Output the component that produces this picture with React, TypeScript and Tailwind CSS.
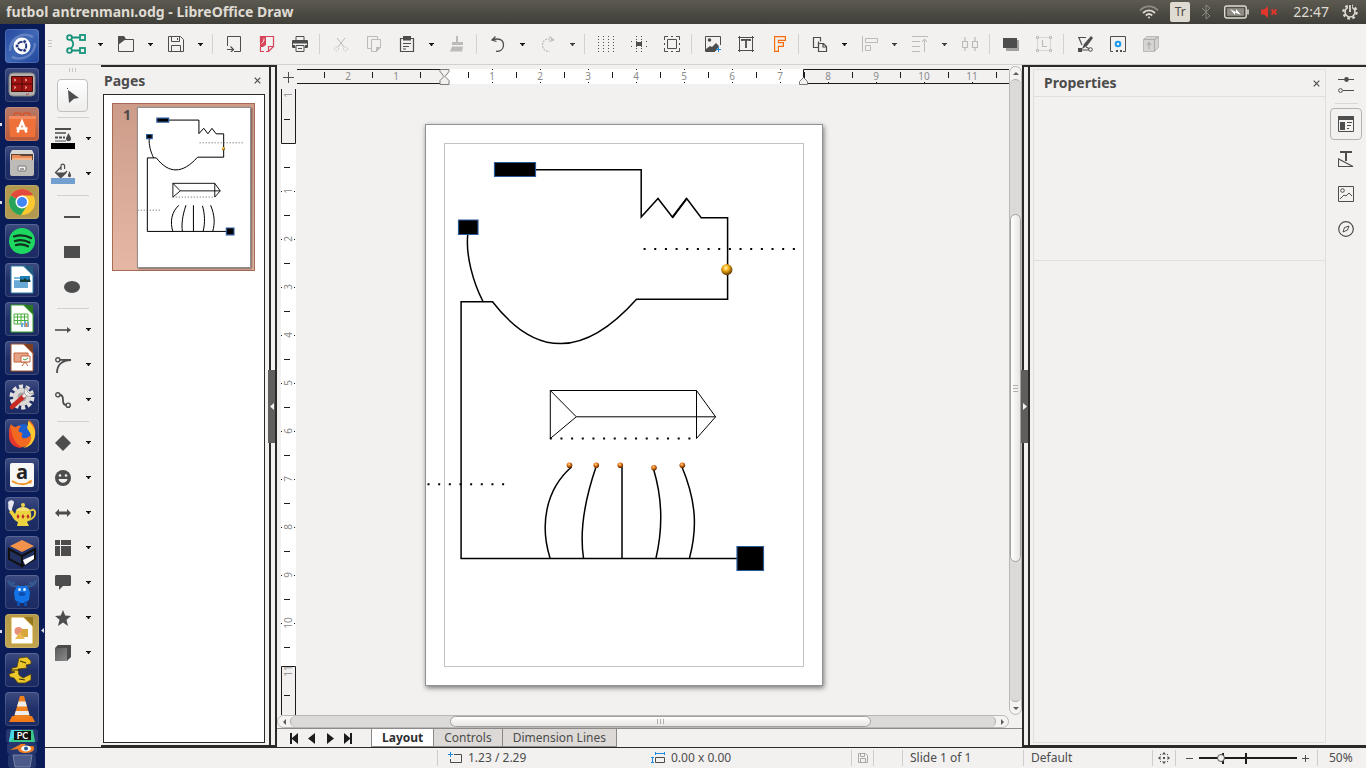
import React, { useState } from "react";

type Kids = { children: React.ReactNode };

const DARK = "#4d4d4d";
const PALE = "#bcbbb9";

/* ---------- shared pieces ---------- */

function Glyph({ children, size = "size-4" }: Kids & { size?: string }) {
  return (
    <svg viewBox="0 0 16 16" className={`${size} shrink-0`} fill="none" aria-hidden="true">
      {children}
    </svg>
  );
}

function Caret({ color = "#111" }: { color?: string }) {
  return (
    <svg viewBox="0 0 5 3" className="h-[3px] w-[5px]" aria-hidden="true">
      <path d="M0 0h5v1H4L3 3H2L1 1H0z" fill={color} />
    </svg>
  );
}

/* ---------- launcher ---------- */

function Doc({ main, children }: Kids & { main: string }) {
  return (
    <g>
      <path d="M6 3h15l7 8v19H6z" fill="#fff" stroke={main} strokeWidth="1" />
      <path d="M18 3h10v10z" fill={main} />
      <path d="M19 3h9v9z" fill="#000" opacity=".25" />
      {children}
    </g>
  );
}

type App = { name: string; tile: string; running?: boolean; active?: boolean; art: React.ReactNode };

const TILE = "bg-linear-to-b from-[#3d4b80] via-[#1f2f69] to-[#1c2b62]";

const apps: App[] = [
  {
    name: "Dash",
    tile: "bg-linear-to-br from-[#2448a0] via-[#4068b6] to-[#20459b]",
    art: (
      <g>
        <path d="M5 22C5 9 18 2 28 8M7 28c12 5 23-3 23-14" stroke="#86a0d2" strokeWidth="2.500" fill="none" opacity=".55" />
        <circle cx="17" cy="17" r="8.500" fill="#fff" />
        <circle cx="17" cy="17" r="4.300" fill="none" stroke="#24387e" strokeWidth="2" />
        <circle cx="12" cy="17" r="1.900" fill="#24387e" stroke="#fff" strokeWidth=".8" />
        <circle cx="19.600" cy="12.600" r="1.900" fill="#24387e" stroke="#fff" strokeWidth=".8" />
        <circle cx="19.600" cy="21.400" r="1.900" fill="#24387e" stroke="#fff" strokeWidth=".8" />
      </g>
    ),
  },
  {
    name: "Terminator",
    tile: TILE,
    art: (
      <g>
        <rect x="4" y="5" width="26" height="23" rx="4" fill="#b3b1ad" stroke="#83827f" />
        <rect x="6" y="8" width="22" height="16" rx="1" fill="#4b0808" />
        <path d="M7 9h9.500v6.500H7zM17.500 9H27v6.500h-9.500zM7 16.500h9.500V23H7zM17.500 16.500H27V23h-9.500z" fill="#a31512" />
        <path d="M9 11l2 1-2 1M20 11l2 1-2 1M9 18.500l2 1-2 1M20 18.500l2 1-2 1" stroke="#ffc9bd" fill="none" strokeWidth=".8" />
        <path d="M21 26l1.500.5 1.500-1" stroke="#c83a30" fill="none" />
      </g>
    ),
  },
  {
    name: "Software",
    tile: "bg-linear-to-b from-[#b57a68] to-[#bb5a38]",
    running: true,
    art: (
      <g>
        <path d="M9 10V7l2-1h3l2 1v3M18 10V7l2-1h3l2 1v3" stroke="#d8552c" strokeWidth="1.400" fill="none" />
        <path d="M4 9h27l-1 21H5z" fill="#f0703a" />
        <path d="M4 9h27v3H4z" fill="#f3895c" />
        <path d="M12.500 25.500l4.500-11 4.500 11M11.500 21.500h11" stroke="#fff" strokeWidth="2.400" fill="none" />
      </g>
    ),
  },
  {
    name: "Files",
    tile: TILE,
    art: (
      <g>
        <path d="M7 4h20l2 4v8H5V8z" fill="#d9d7d3" />
        <path d="M6 8h22v9H6z" fill="#5c4438" />
        <path d="M7 9h8l1 1h11v7H7z" fill="#e98a57" />
        <path d="M7 12h20v4H7z" fill="#f0b48d" />
        <rect x="5" y="14" width="24" height="16" rx="2" fill="#bdbbb7" />
        <rect x="13" y="20" width="8" height="5" rx="1" fill="#eee" stroke="#777" />
        <path d="M15 23h4" stroke="#555" />
      </g>
    ),
  },
  {
    name: "Chrome",
    tile: "bg-[#b19a50]",
    running: true,
    art: (
      <g>
        <circle cx="17" cy="17" r="13" fill="#fbc92f" />
        <path d="M17 17L5.700 10.500A13 13 0 0 1 28.300 10.500H17z" fill="#e24a3b" />
        <path d="M5.700 10.500A13 13 0 0 0 16 30l6-9.500-5-3.500z" fill="#27a35b" />
        <circle cx="17" cy="17" r="6.500" fill="#fff" />
        <circle cx="17" cy="17" r="5" fill="#4285f4" />
      </g>
    ),
  },
  {
    name: "Spotify",
    tile: TILE,
    art: (
      <g>
        <circle cx="17" cy="17" r="13" fill="#1ed760" />
        <path d="M9 12.500c6-2 12-1 17 1.500M10 17c5-1.500 10-1 14.500 1.500M11 21c4-1 8-.8 12 1.300" stroke="#10301c" strokeWidth="2.300" strokeLinecap="round" fill="none" />
      </g>
    ),
  },
  {
    name: "Writer",
    tile: TILE,
    art: (
      <Doc main="#2e7aa8">
        <path d="M9 14h15v2H9zM9 17h17v2H9z" fill="#7fb9dd" />
        <path d="M9 18h14v7H9z" fill="#6aa9d4" />
        <path d="M15 13h10v6H15z" fill="#1f7fb5" />
        <path d="M15 19v-3l3 1 2-2 2 2 3-1v3z" fill="#173b31" />
      </Doc>
    ),
  },
  {
    name: "Calc",
    tile: TILE,
    art: (
      <Doc main="#38a12c">
        <path d="M9 12h14v10H9z" fill="#fff" stroke="#4cae3c" />
        <path d="M9 15h14M9 18.500h14M12.500 12v10M16 12v10M19.500 12v10" stroke="#4cae3c" />
        <path d="M17 25v-4M20 25v-6M23 25v-5" stroke="#6aa9d4" strokeWidth="2" />
        <path d="M21.500 25v-4" stroke="#e9854f" strokeWidth="2" />
      </Doc>
    ),
  },
  {
    name: "Impress",
    tile: TILE,
    art: (
      <Doc main="#a8542e">
        <path d="M9 12h14v9H9z" fill="#e7a386" stroke="#c4623a" />
        <path d="M16 15h9v6h-9z" fill="#fff" stroke="#c4623a" />
        <path d="M18 18l2 1 3-2" stroke="#3f9e44" fill="none" />
        <path d="M20 21l-3 4M20 21l3 4" stroke="#c4623a" fill="none" />
      </Doc>
    ),
  },
  {
    name: "System Settings",
    tile: TILE,
    art: (
      <g>
        <circle cx="17" cy="17" r="10.500" fill="none" stroke="#e3e2e0" strokeWidth="4" strokeDasharray="4 2.600" />
        <circle cx="17" cy="17" r="9" fill="#dad9d6" />
        <circle cx="17" cy="17" r="4.500" fill="#a3a3a6" />
        <path d="M7 27l11-10" stroke="#c72a23" strokeWidth="4.500" strokeLinecap="round" />
        <path d="M18 17l6-6" stroke="#ecebea" strokeWidth="3" />
        <path d="M22 7a5 5 0 1 0 7 6l-4 1-3-3z" fill="#ecebea" stroke="#777" strokeWidth=".6" />
      </g>
    ),
  },
  {
    name: "Firefox",
    tile: TILE,
    art: (
      <g>
        <circle cx="18" cy="15" r="10" fill="#1d5fd1" />
        <path d="M6 5c1 2 3 3 5 3 2-2 4-1 5 0-2 1-3 3-2 5 3 0 4 2 3 3-2 4 6 5 9-1 1-4-1-7-3-9 1-2 1-4 1-5 5 4 7 9 6 14a13 13 0 0 1-26 0C4 12 4 9 6 5z" fill="#f26a21" />
        <path d="M23 2c6 5 8 10 7 15a13 13 0 0 1-12 12c7-3 9-8 8-13-1-3-3-5-4-7 1-2 1-5 1-7z" fill="#fdc830" />
        <path d="M6 8c0 6 2 15 11 21C8 29 4 23 4 17c0-3 0-6 2-9z" fill="#e6352d" />
      </g>
    ),
  },
  {
    name: "Amazon",
    tile: TILE,
    art: (
      <g>
        <rect x="5" y="5" width="24" height="24" rx="2" fill="#f6f6f4" />
        <text x="17" y="21" textAnchor="middle" fontSize="20" fontWeight="bold" fontFamily="Open Sans, sans-serif" fill="#222">a</text>
        <path d="M7 23c6 4 13 4 18 1" stroke="#f5911e" strokeWidth="2" fill="none" />
        <path d="M23 23l4-1-1 4z" fill="#f5911e" />
      </g>
    ),
  },
  {
    name: "Teapot",
    tile: TILE,
    art: (
      <g>
        <path d="M5 14C2 11 4 9 3 6c0-3 5-4 6-1 0 3-2 4-2 9z" fill="#e6e6ee" />
        <circle cx="18" cy="8" r="2" fill="#f1d64c" />
        <path d="M11 13c4-4 10-4 14 0l-1 2H12z" fill="#f6e272" />
        <path d="M25 14c6-5 8 6-1 9" stroke="#e9cc3f" strokeWidth="2" fill="none" />
        <path d="M11 14h14c3 5 0 9-3 11l2 4H12l1-4c-3-1-5-4-6-6l-3-4 3-2 3 4z" fill="#ecd23f" />
        <path d="M13 17l1.500 2.500L13 22l-1.500-2.500zM18 17l1.500 2.500L18 22l-1.500-2.500zM23 17l1.500 2.500L23 22l-1.500-2.500z" fill="#bf2a2a" />
      </g>
    ),
  },
  {
    name: "Cube viewer",
    tile: TILE,
    art: (
      <g>
        <path d="M17 4l12 6-12 6-12-6z" fill="#f3924a" />
        <path d="M4 13l13 7v10L4 23z" fill="#22315f" stroke="#111" strokeWidth="2" />
        <path d="M17 20l13-7v10l-13 7z" fill="#22315f" stroke="#111" strokeWidth="2" />
        <path d="M18 24l11-5v4l-9 6z" fill="#fff" />
      </g>
    ),
  },
  {
    name: "Moose",
    tile: TILE,
    art: (
      <g>
        <path d="M3 5c1 6 7 7 11 6M31 5c-1 6-7 7-11 6M4 8l6 0M30 8l-6 0" stroke="#35578f" strokeWidth="2.500" fill="none" />
        <path d="M12 11h10l3 6-1 8-4 3h-6l-4-3-1-8z" fill="#1473e6" />
        <circle cx="14.500" cy="14.500" r="1.500" fill="#d9ecff" /><circle cx="19.500" cy="14.500" r="1.500" fill="#d9ecff" />
        <ellipse cx="17" cy="19" rx="3.500" ry="2" fill="#0b4fb0" />
        <path d="M12 26v5h3v-4M19 27v4h3v-5" fill="#0d4fae" />
      </g>
    ),
  },
  {
    name: "Draw",
    tile: "bg-linear-to-b from-[#b49a48] to-[#c1a453]",
    running: true,
    active: true,
    art: (
      <Doc main="#c8a12c">
        <circle cx="13.500" cy="17" r="4" fill="#e79079" />
        <path d="M16 15h7v8h-7z" fill="#d9a63e" />
        <path d="M10 25l5-7 5 7z" fill="#ebb84d" />
      </Doc>
    ),
  },
  {
    name: "Rapid tool",
    tile: TILE,
    art: (
      <g>
        <path d="M14 5l8-1 4 4v3l-5 1 1 3-9 1 1 6 4 3 8-4v6l-6 3h-7l-4-5-4-1-1-3 6-2-4-1 1-3 5-1 1-5z" fill="#ecc72c" stroke="#4c3e0d" strokeWidth=".8" />
        <path d="M6 17h10M15 8l6 2M14 26l6 1" stroke="#3b300a" strokeWidth="1.200" />
      </g>
    ),
  },
  {
    name: "VLC",
    tile: TILE,
    art: (
      <g>
        <path d="M7 24h20l3 6H4z" fill="#ef7a17" />
        <path d="M15 4h4l6 21c-4 3-12 3-16 0z" fill="#f0821e" />
        <path d="M13.500 9.500h7l1.400 5h-9.800zM10.800 19h12.500l1.200 4h-15z" fill="#ededed" />
      </g>
    ),
  },
];

function Launcher() {
  return (
    <nav aria-label="Launcher" className="flex w-[45px] shrink-0 flex-col items-center gap-[5px] overflow-hidden border-r border-[#15215c] bg-[#0a1c58] pt-[5px]">
      {apps.map((a) => (
        <button key={a.name} aria-label={a.name} className={`relative size-[34px] shrink-0 rounded-[4px] shadow-[inset_0_0_0_1px_rgba(255,255,255,0.14)] ${a.tile}`}>
          <svg viewBox="0 0 34 34" className="size-full" aria-hidden="true">{a.art}</svg>
          {a.running && <span className="absolute top-4 -left-[5px] h-[3px] w-[2px] bg-[#dcdde6]" />}
          {a.active && (
            <svg viewBox="0 0 3 5" className="absolute top-[14px] -right-[5px] h-[5px] w-[3px]"><path d="M3 0v5L0 2.500z" fill="#dcdde6" /></svg>
          )}
        </button>
      ))}
      <button aria-label="More applications" className="-mt-[3px] shrink-0">
        <svg viewBox="0 0 34 40" className="h-10 w-[34px]">
          <rect x="1" y="1" width="32" height="14" rx="3" fill="#26376f" />
          <path d="M6 2h22l2 12H4z" fill="#38c98b" />
          <path d="M6 2h11L4 14z" fill="#45d6e8" />
          <rect x="9" y="3" width="17" height="9" fill="#111" />
          <text x="17.500" y="11" textAnchor="middle" fontSize="9" fontWeight="bold" fontFamily="Lato, sans-serif" fill="#fff">PC</text>
          <rect x="2" y="15" width="30" height="11" rx="3" fill="#26376f" />
          <path d="M5 22l11-6h5l-2 2h9c3 3 0 7-7 7-6 0-8-2-8-4z" fill="#ee7d22" />
          <ellipse cx="21" cy="20.500" rx="5" ry="3" fill="#fff" /><circle cx="21" cy="20.500" r="2" fill="#265d9c" />
          <rect x="3" y="26" width="28" height="14" rx="3" fill="#24356c" />
          <path d="M8 27h19l-2 12H10z" fill="#4b5a8a" stroke="#8792b2" strokeWidth=".8" />
        </svg>
      </button>
    </nav>
  );
}

/* ---------- top bar ---------- */

function TopBar() {
  return (
    <header className="flex h-6 shrink-0 items-center bg-linear-to-b from-[#5c5a50] to-[#3f3e38] pr-2 pl-[6px] text-[#dfdbd2]">
      <h1 className="flex-1 text-[14px] leading-6 font-bold">futbol antrenmanı.odg - LibreOffice Draw</h1>
      <div className="flex items-center">
        <svg viewBox="0 0 20 14" className="mr-[11px] h-[14px] w-5" fill="none" stroke="#dfdbd2" strokeWidth="1.800">
          <path d="M1 5.500c5-5.500 13-5.500 18 0" stroke="#8f8d86" />
          <path d="M4 8c3.500-3.500 8.500-3.500 12 0M6.800 10.500c2-1.800 4.400-1.800 6.400 0" />
          <circle cx="10" cy="12.500" r="1" fill="#dfdbd2" stroke="none" />
        </svg>
        <span className="flex h-5 w-5 items-center justify-center rounded-[2px] bg-[#dfdbd2] text-[12px] text-[#4a4942]">Tr</span>
        <svg viewBox="0 0 10 16" className="ml-[11px] h-4 w-[10px]" fill="none" stroke="#8a8881"><path d="M1 4l8 8-4 3V1l4 3-8 8" /></svg>
        <svg viewBox="0 0 25 14" className="ml-[13px] h-[14px] w-[25px]" fill="none">
          <rect x=".7" y="1" width="21.500" height="12" rx="2" stroke="#dfdbd2" strokeWidth="1.400" />
          <rect x="3" y="3.200" width="17" height="7.600" fill="#8d8b83" />
          <path d="M6 4l6 3V4l5 6-6-2.500V10z" fill="#fff" />
          <path d="M24 4.500v5" stroke="#dfdbd2" strokeWidth="1.500" />
        </svg>
        <svg viewBox="0 0 18 14" className="ml-3 h-[14px] w-[18px]">
          <path d="M0 4.500h3L7 1v12L3 9.500H0z" fill="#e0362c" />
          <path d="M10.500 4.500l5 5M15.500 4.500l-5 5" stroke="#e0362c" strokeWidth="2" />
        </svg>
        <time className="ml-[14px] text-[14px] leading-6">22:47</time>
        <svg viewBox="0 0 16 16" className="ml-[13px] size-4" fill="none">
          <circle cx="8" cy="8" r="6.600" stroke="#dfdbd2" strokeWidth="2.200" strokeDasharray="2.700 2.480" />
          <circle cx="8" cy="8" r="5" stroke="#dfdbd2" strokeWidth="1.600" />
          <path d="M8 0v8" stroke="#4a4942" strokeWidth="4" /><path d="M8 1v7" stroke="#dfdbd2" strokeWidth="1.800" />
        </svg>
      </div>
    </header>
  );
}

/* ---------- toolbar ---------- */

type Tool = { name: string; icon: React.ReactNode; menu?: boolean; off?: boolean };

const toolGroups: Tool[][] = [
  [
    {
      name: "Templates",
      menu: true,
      icon: (
        <svg viewBox="0 0 20 20" className="size-5" fill="none" stroke="#19937a" strokeWidth="1.800">
          <circle cx="3.500" cy="3.500" r="2.400" /><circle cx="3.500" cy="16.500" r="2.400" />
          <rect x="14" y="1" width="5" height="5" /><rect x="14" y="14" width="5" height="5" />
          <path d="M6 3.500h8M6 16.500h8M5 5.500c3 3 3 6 0 9" />
        </svg>
      ),
    },
    { name: "Open", menu: true, icon: <Glyph><path d="M.5 1v14.500h15V3.500H7" stroke={DARK} /><path d="M0 0h6l2 3-4 3-4 3z" fill={DARK} /></Glyph> },
    { name: "Save", menu: true, icon: <Glyph><path d="M.5.5h12l3 3v12H.5zM3.500.5v5h8v-5M3.500 15.500v-6h9v6M9.500 2v2" stroke={DARK} /></Glyph> },
  ],
  [
    { name: "Export", icon: <Glyph><path d="M1.500 10V.5h13v15H8" stroke={DARK} /><path d="M1 13.500h6M4.500 10.500l3 3-3 3" stroke={DARK} strokeWidth="1.200" /></Glyph> },
    { name: "Export as PDF", icon: <Glyph><path d="M1.500 7V.5h13v10l-5 5H7M14 10.500H9.500V15M1.500 10v5.500H5" stroke="#d8455a" strokeWidth="1.200" /><path d="M1 0h6v9l-3 2H1z" fill="#d8455a" /><path d="M2.500 7.500C5 6 5 4 5 2.500" stroke="#fff" strokeWidth=".9" /></Glyph> },
    { name: "Print", icon: <Glyph><path d="M4 .5h8v4H4zM.5 4.500h15v7h-3M3.500 11.500h-3v-7" stroke={DARK} /><path d="M1 5h14v2.500H1zM1 9h2v3H1zM13 9h2v3h-2z" fill={DARK} /><path d="M4 9.500h8v6H4zM6 12.500h4" stroke={DARK} /></Glyph> },
  ],
  [
    { name: "Cut", off: true, icon: <Glyph><path d="M4 2l7 9M12 2l-7 9" stroke={PALE} /><circle cx="3.500" cy="13" r="2" stroke={PALE} strokeDasharray="1 1" /><circle cx="12.500" cy="13" r="2" stroke={PALE} strokeDasharray="1 1" /></Glyph> },
    { name: "Copy", off: true, icon: <Glyph><path d="M5 12.500H1.500v-12h10v3M5.500 3.500h9v8l-4 4h-5z" stroke={PALE} /><path d="M10 11h5l-5 5z" fill={PALE} /></Glyph> },
    { name: "Paste", menu: true, icon: <Glyph><path d="M1.500 2.500h13v13h-13z" stroke={DARK} strokeWidth="1.200" /><path d="M4 0h8v4.500H4z" fill={DARK} /><path d="M4 7.500h8M4 10.500h6M4 13h3" stroke={DARK} /></Glyph> },
    { name: "Clone formatting", off: true, icon: <Glyph><path d="M7 0h2v6h5v3H3V6h4zM3 10.500h11l-1 5H1z" fill={PALE} /></Glyph> },
  ],
  [
    { name: "Undo", menu: true, icon: <Glyph><path d="M5.500 .5L2 4l4.500 1.500M2.500 4C9 1.500 13.500 4 13.500 9c0 4-3 6.500-7.500 6.500" stroke={DARK} strokeWidth="1.300" /></Glyph> },
    { name: "Redo", menu: true, off: true, icon: <Glyph><path d="M9.500 .5L13.500 4 9 5.500" stroke={PALE} strokeWidth="1.200" /><path d="M13 4C7 1.500 2.500 4 2.500 9c0 4 3 6.500 7 6.500" stroke={PALE} strokeWidth="1.200" strokeDasharray="2 1" /></Glyph> },
  ],
  [
    { name: "Display grid", icon: <Glyph><path d="M.5 0v16M5.500 0v16M10.500 0v16M15.500 0v16" stroke={DARK} strokeDasharray="1 2" /></Glyph> },
    { name: "Helplines", icon: <Glyph><path d="M5.500 0v16M10.500 0v16" stroke={DARK} strokeDasharray="1 2" /><path d="M0 5.500h16M0 10.500h16" stroke={DARK} strokeDasharray="1 4" /><path d="M5 6h6v4H5z" fill={DARK} /></Glyph> },
    { name: "Zoom and pan", icon: <Glyph><path d="M.5 4V.5H4M12 .5h3.500V4M15.500 12v3.500H12M4 15.500H.5V12M3.500 3.500h9v9h-9z" stroke={DARK} /><path d="M7 .5h2M7 15.500h2M.5 7v2M15.500 7v2" stroke={DARK} /></Glyph> },
  ],
  [
    { name: "Insert image", icon: <Glyph><path d="M15.500 9V.5H.5v15H10" stroke={DARK} /><circle cx="4.500" cy="4" r="1.800" fill={DARK} /><path d="M1 15V13l4-3 2 1 4-4 3 3-3 5z" fill={DARK} /><path d="M13.500 11v5M11 13.500h5" stroke="#1b8ae0" /></Glyph> },
    { name: "Insert text box", icon: <Glyph><path d="M0 1.500h16M0 14.500h16M1.500 0v16M14.500 0v16" stroke={DARK} /><path d="M4 5V3.800h8V5M8 4v8" stroke={DARK} strokeWidth="1.800" /></Glyph> },
    { name: "Fontwork", icon: <Glyph><path d="M3.600.6h10.800v3.800H7.400v2.200h5v3.800h-5v5H3.600z" stroke="#f66b0c" strokeWidth="1.200" /></Glyph> },
  ],
  [
    { name: "Transformations", menu: true, icon: <Glyph><path d="M6 11.500H1.500v-10h7v4M6.500 5.500v6" stroke={DARK} strokeWidth="1.200" /><path d="M6.500 7.500h5l3 3v5h-8zM11 8v3h3" stroke={DARK} strokeWidth="1.200" /></Glyph> },
    { name: "Align", menu: true, off: true, icon: <Glyph><path d="M.5 0v16M3.500 2.500h12v4h-12zM3.500 9.500h5v5h-5z" stroke={PALE} /></Glyph> },
    { name: "Arrange", menu: true, off: true, icon: <Glyph><path d="M0 .5h16M0 5.500h8M0 10.500h8M0 15.500h8M12.500 16V3M10 6l2.500-3L15 6" stroke={PALE} /></Glyph> },
    { name: "Distribute", off: true, icon: <Glyph><path d="M.5 5.500h5v6h-5zM10.500 5.500h5v6h-5zM3 1v4M3 12v3M13 1v4M13 12v3" stroke={PALE} strokeWidth="1.200" /></Glyph> },
  ],
  [
    { name: "Shadow", icon: <Glyph><path d="M3 4h13v11H3z" fill="#a3a2a0" /><path d="M0 2h14v10H0z" fill={DARK} /></Glyph> },
    { name: "Crop", off: true, icon: <Glyph><path d="M1.500 1.500h13v13h-13z" stroke={PALE} strokeDasharray="1 1" /><path d="M.5.5h2v2h-2zM13.500.5h2v2h-2zM.5 13.500h2v2h-2zM13.500 13.500h2v2h-2z" fill="#f2f1f0" stroke={PALE} /><path d="M6.500 4v6.500H11" stroke={PALE} strokeWidth="1.200" /></Glyph> },
  ],
  [
    { name: "Toggle point edit mode", icon: <Glyph><path d="M1 1.500h8M2 2l3 7M3 14h10M9 11l4 2" stroke={DARK} strokeWidth="1.200" /><path d="M14 0l2 2-6 8-5 3 2-5zM1 12h4v4H1z" fill={DARK} /><circle cx="13.500" cy="13.500" r="1.800" fill="#f2f1f0" stroke={DARK} /></Glyph> },
    { name: "Glue points", icon: <Glyph><path d="M3 15.500H.5V.5h15v15H13" stroke={DARK} /><circle cx="8" cy="8" r="2.300" stroke="#1b9af0" strokeWidth="2" /><path d="M6 15h2M10 15h2" stroke={DARK} strokeWidth="2" /></Glyph> },
    { name: "Toggle extrusion", off: true, icon: <Glyph><path d="M.5 3.500l3-3h12v11l-4 4H.5z" fill="#d5d4d2" stroke={PALE} /><path d="M.5 3.500h11v12M11.500 3.500l4-3M6 13V7M4 9l2-2.500L8 9" stroke="#aeadab" strokeWidth="1.200" /></Glyph> },
  ],
];

function Toolbar() {
  return (
    <div role="toolbar" aria-label="Standard" className="flex h-[41px] shrink-0 items-center overflow-hidden border-b border-[#d3d1cf] pl-[3px]">
      <svg viewBox="0 0 4 8" className="mr-[7px] h-2 w-1 shrink-0"><path d="M0 .5h4M0 3.500h4M0 6.500h4" stroke="#c9c7c5" /></svg>
      {toolGroups.map((group, i) => (
        <React.Fragment key={i}>
          {i > 0 && <span className="mx-[3px] h-5 w-[2px] shrink-0 border-l border-[#d3d1cf]" />}
          {group.map((t) => (
            <React.Fragment key={t.name}>
              <button aria-label={t.name} disabled={t.off} className="flex h-8 w-[33px] shrink-0 items-center justify-center">{t.icon}</button>
              {t.menu && (
                <button aria-label={`${t.name} options`} className="flex h-8 w-[17px] shrink-0 items-center justify-center">
                  <Caret color={t.off ? "#3a3a3a" : "#111"} />
                </button>
              )}
            </React.Fragment>
          ))}
        </React.Fragment>
      ))}
    </div>
  );
}

/* ---------- drawing tools ---------- */

const colorTools: Tool[] = [
  {
    name: "Line color",
    menu: true,
    icon: (
      <svg viewBox="0 0 24 21" className="h-[21px] w-6" fill="none">
        <path d="M4 1h16" stroke={DARK} strokeWidth="2" /><path d="M4 5h11" stroke={DARK} strokeWidth="1.500" />
        <path d="M4 9.500h10" stroke={DARK} strokeWidth="2" strokeDasharray="3 1" /><path d="M4 13h11" stroke={DARK} />
        <path d="M17.500 5l2.500 5a2.600 2.600 0 1 1-5 0z" fill={DARK} />
        <path d="M0 15h24v6H0z" fill="#000" />
      </svg>
    ),
  },
  {
    name: "Fill color",
    menu: true,
    icon: (
      <svg viewBox="0 0 24 21" className="h-[21px] w-6" fill="none">
        <path d="M10 7V3a1.800 1.800 0 0 1 3.600 0v3M10 4L4.500 9.500l5 5L16 8" stroke={DARK} strokeWidth="1.200" />
        <path d="M4 9.500h12l-5 5H9z" fill={DARK} /><path d="M18.500 8l1.500 4a1.600 1.600 0 1 1-3 0z" fill={DARK} />
        <path d="M0 15h24v6H0z" fill="#729fcf" />
      </svg>
    ),
  },
];

const plainTools: Tool[] = [
  { name: "Line", icon: <Glyph><path d="M0 8h16" stroke={DARK} strokeWidth="2" /></Glyph> },
  { name: "Rectangle", icon: <Glyph><path d="M0 2h16v12H0z" fill={DARK} /></Glyph> },
  { name: "Ellipse", icon: <Glyph><ellipse cx="8" cy="8" rx="8" ry="6" fill={DARK} /></Glyph> },
];

const lineTools: Tool[] = [
  { name: "Lines and arrows", menu: true, icon: <Glyph><path d="M0 8h13" stroke={DARK} strokeWidth="1.600" /><path d="M12 5l4 3-4 3z" fill={DARK} /></Glyph> },
  { name: "Curves and polygons", menu: true, icon: <Glyph><circle cx="2.800" cy="2.800" r="2.100" stroke={DARK} strokeWidth="1.400" /><path d="M5 2.800h11M16 3C8 3 2 7 2 16" stroke={DARK} strokeWidth="1.800" /></Glyph> },
  { name: "Connectors", menu: true, icon: <Glyph><circle cx="2.800" cy="2.800" r="2.100" stroke={DARK} strokeWidth="1.400" /><circle cx="13.200" cy="13.200" r="2.100" stroke={DARK} strokeWidth="1.400" /><path d="M5 3c6 0 0 10 6 10" stroke={DARK} strokeWidth="1.800" /></Glyph> },
];

const shapeTools: Tool[] = [
  { name: "Basic shapes", menu: true, icon: <Glyph><path d="M8 0l8 8-8 8-8-8z" fill={DARK} /></Glyph> },
  { name: "Symbol shapes", menu: true, icon: <Glyph><circle cx="8" cy="8" r="8" fill={DARK} /><circle cx="5" cy="5.500" r="1.300" fill="#f2f1f0" /><circle cx="11" cy="5.500" r="1.300" fill="#f2f1f0" /><path d="M3.500 9h9c-1 5-8 5-9 0z" fill="#f2f1f0" /></Glyph> },
  { name: "Block arrows", menu: true, icon: <Glyph><path d="M0 8l4-4v2.500h8V4l4 4-4 4V9.500H4V12z" fill={DARK} /></Glyph> },
  { name: "Flowchart", menu: true, icon: <Glyph><path d="M0 0h5v5H0zM6 0h10v5H6zM0 6h5v10H0zM6 6h10v10H6z" fill={DARK} /></Glyph> },
  { name: "Callouts", menu: true, icon: <Glyph><path d="M1 0h14l1 1v9l-1 1H8l-4 4v-4H1l-1-1V1z" fill={DARK} /></Glyph> },
  { name: "Stars and banners", menu: true, icon: <Glyph><path d="M8 0l2.200 5.500L16 6l-4.500 3.700L13 16l-5-3.500L3 16l1.500-6.300L0 6l5.800-.5z" fill={DARK} /></Glyph> },
  {
    name: "3D objects",
    menu: true,
    icon: (
      <Glyph>
        <defs><linearGradient id="cube" x1="0" y1="0" x2="1" y2="1"><stop offset="0" stopColor="#5a5a5a" /><stop offset="1" stopColor="#8a8a8a" /></linearGradient></defs>
        <path d="M0 3l3-3h13v12l-4 4H0z" fill="#4a4a4a" /><path d="M0 3h12v13H0z" fill="url(#cube)" />
      </Glyph>
    ),
  },
];

function ToolRow({ t }: { t: Tool }) {
  return (
    <div className={`flex h-[35px] shrink-0 items-center ${t.menu ? "pl-[6px]" : "pl-[15px]"}`}>
      <button aria-label={t.name} className="flex h-7 w-6 items-center justify-center">{t.icon}</button>
      {t.menu && <button aria-label={`${t.name} options`} className="ml-[5px] flex h-7 w-4 items-center justify-center"><Caret /></button>}
    </div>
  );
}

function ToolRule() {
  return <div className="flex h-2 shrink-0 items-center pl-3"><span className="w-8 border-t border-[#d3d1cf]" /></div>;
}

function DrawingTools() {
  return (
    <div role="toolbar" aria-label="Drawing" className="flex w-14 shrink-0 flex-col overflow-hidden">
      <div className="flex h-[13px] shrink-0 justify-center pt-[3px]">
        <svg viewBox="0 0 8 4" className="h-1 w-2"><path d="M.5 0v4M3.500 0v4M6.500 0v4" stroke="#c9c7c5" /></svg>
      </div>
      <div className="flex h-[35px] shrink-0 items-center pl-3">
        <button aria-label="Select" className="flex h-[33px] w-[31px] items-center justify-center rounded-[4px] border border-[#c3c1bf] bg-linear-to-b from-white to-[#eeedec]">
          <svg viewBox="0 0 16 16" className="size-4"><path d="M3 2l11 8-5 .8L4 15z" fill={DARK} /><path d="M2 0h1v1H2z" fill={DARK} /></svg>
        </button>
      </div>
      <ToolRule />
      {colorTools.map((t) => <ToolRow key={t.name} t={t} />)}
      <ToolRule />
      {plainTools.map((t) => <ToolRow key={t.name} t={t} />)}
      <ToolRule />
      {lineTools.map((t) => <ToolRow key={t.name} t={t} />)}
      <ToolRule />
      {shapeTools.map((t) => <ToolRow key={t.name} t={t} />)}
    </div>
  );
}

/* ---------- the drawing itself ---------- */

const balls = [[569.5, 465.2], [596.3, 465.2], [620.3, 465.2], [654, 467.8], [682.3, 465.2]];

function Drawing({ id, thumb, className }: { id: string; thumb?: boolean; className: string }) {
  const w = thumb ? 1 : 1.5;
  const thin = thumb ? 0.9 : 1;
  const dot = { stroke: thumb ? "#555" : "#000", strokeWidth: thumb ? 1 : 2, strokeDasharray: thumb ? "1 2" : "2 8.660" };
  return (
    <svg viewBox="425 124 398 562" className={className} role="img" aria-label="Slide 1">
      <defs>
        <radialGradient id={`${id}g`} cx=".42" cy=".35" r=".65"><stop offset="0" stopColor="#fff4b8" /><stop offset=".4" stopColor="#f6b017" /><stop offset="1" stopColor="#5a3200" /></radialGradient>
        <radialGradient id={`${id}o`} cx=".42" cy=".35" r=".65"><stop offset="0" stopColor="#ffd9a0" /><stop offset=".4" stopColor="#ec7a18" /><stop offset="1" stopColor="#5a2400" /></radialGradient>
      </defs>
      {!thumb && <rect x="444.500" y="143.500" width="359" height="523" fill="none" stroke="#c3c3c3" />}
      <g fill="none" stroke="#000" strokeWidth={w}>
        <path vectorEffect="non-scaling-stroke" d="M535 169.700H641.200V217L658 198.500 672.500 217.300 686.700 198.500 701.200 217.700H727.600V299.200H636.500C584 358 536 358 492.500 301.700H461.100V558.400H738" />
        <path vectorEffect="non-scaling-stroke" d="M467.800 234C465.500 255 473 282 483 301.500" />
        <path vectorEffect="non-scaling-stroke" d="M571.500 467C545 490 540 526 550 558M596 467C583 505 580 535 583.500 558M622 467V558M653.500 469C662 497 663 528 656 558M682 467C697 503 697 530 689.500 558" />
      </g>
      {!thumb && <path d="M672.500 217.300L686.700 198.500" stroke="#000" strokeWidth="2" />}
      <path vectorEffect="non-scaling-stroke" d="M550.300 438.500V390.500H696.500L715.600 416.800 696.500 438.500V390.500M550.300 390.500L576.300 416.800 550.300 438.500M576.300 416.800H715.600" fill="none" stroke="#000" strokeWidth={thin} />
      <path vectorEffect="non-scaling-stroke" d="M643.600 249H795.500M549.800 438.500H692M427.500 484.300H505" fill="none" {...dot} />
      <g fill="#000" stroke="#2b5a9b" strokeWidth="1.200">
        <rect vectorEffect="non-scaling-stroke" x="494.500" y="162.500" width="41" height="14" />
        <rect vectorEffect="non-scaling-stroke" x="458.500" y="220" width="19.500" height="14.500" />
        <rect vectorEffect="non-scaling-stroke" x="737" y="546.500" width="26.500" height="24" />
      </g>
      <circle cx="726.800" cy="269.600" r="5.600" fill={`url(#${id}g)`} />
      {!thumb && balls.map(([x, y]) => <circle key={x} cx={x} cy={y} r="2.800" fill={`url(#${id}o)`} />)}
    </svg>
  );
}

/* ---------- pages panel ---------- */

function CloseX() {
  return <svg viewBox="0 0 7 7" className="size-[7px]"><path d="M.7.7l5.600 5.600M6.300.7L.7 6.300" stroke="#4d4d4d" strokeWidth="1.200" /></svg>;
}

function PagesPanel() {
  return (
    <section aria-label="Pages" className="flex w-[168px] shrink-0 flex-col border-y-2 border-[#2c2a28] px-[2px] pb-[2px]">
      <div className="flex h-[27px] items-center justify-between pr-[6px] pl-[1px]">
        <h2 className="text-[14px] leading-5 font-bold text-[#4c4c4c]">Pages</h2>
        <button aria-label="Close pages panel"><CloseX /></button>
      </div>
      <div className="mr-[2px] flex-1 border border-[#2c2a28] bg-white py-2 pr-[9px] pl-2">
        <button aria-label="Page 1" className="flex h-[168px] w-full items-start border border-[#a86b53] bg-linear-to-b from-[#cc9c89] to-[#e5b8a5] py-[3px] pr-[3px] pl-[10px]">
          <span className="w-[14px] text-left text-[14px] leading-4 font-bold text-[#4c4c4c]">1</span>
          <span className="flex flex-1 bg-white shadow-[1px_1px_2px_rgba(0,0,0,0.45)] outline-1 -outline-offset-1 outline-[#8f8f8f]">
            <Drawing id="t" thumb className="w-full" />
          </span>
        </button>
      </div>
    </section>
  );
}

function Splitter({ label, end }: { label: string; end?: boolean }) {
  return (
    <div className="flex w-2 shrink-0 items-center justify-end border-x-[2px] border-y-2 border-[#2c2a28]">
      <button aria-label={label} className="flex h-[73px] w-[7px] shrink-0 items-center justify-center bg-[#5f5e5c]">
        <svg viewBox="0 0 4 7" className="h-[7px] w-1"><path d={end ? "M0 0v7l4-3.500z" : "M4 0v7L0 3.500z"} fill="#f2f1f0" /></svg>
      </button>
    </div>
  );
}

/* ---------- rulers ---------- */

const INCH = 48;
const range = (a: number, b: number) => Array.from({ length: b - a + 1 }, (_, i) => a + i);

function HorizontalRuler() {
  const zero = 147;
  const end = 506;
  return (
    <svg className="h-4 min-w-0 flex-1" aria-label="Horizontal ruler" role="img">
      <rect x={zero} y="0" width={end - zero} height="15" fill="#fff" />
      <path d={`M0 .5H${zero}M0 14.500H${zero}M${end + 0.5} 14V.5H3000M${end} 14.500H3000`} fill="none" stroke="#1c1c1c" />
      {range(-3, 11).map((n) => (
        <g key={n}>
          {n !== 0 && n > -3 && <text x={zero + n * INCH} y="11" textAnchor="middle" fontSize="10" fill="#8b8b8b">{Math.abs(n)}</text>}
          <path d={`M${zero + n * INCH + 24.5} 3v6`} stroke="#1c1c1c" />
          {n > 0 && <path d={`M${zero + n * INCH + 0.5} 0v1M${zero + n * INCH + 0.5} 13v1`} stroke="#1c1c1c" />}
        </g>
      ))}
      <path d={`M${zero - 4} .5h9v2l-4 5 4 4v4h-9v-4l4-4-4-5zM${end - 3.5} 15.500v-3l4-4 4 4v3z`} fill="#f2f1f0" stroke="#7a7a7a" />
    </svg>
  );
}

function VerticalRuler() {
  const zero = 58;
  const end = 581;
  return (
    <svg className="ml-1 h-full w-4 shrink-0" aria-label="Vertical ruler" role="img">
      <rect x="0" y={zero} width="15" height={end - zero} fill="#fff" />
      <path d={`M.5 4V${zero + 0.5}H14.500V4M.5 3000V${end + 0.5}H14.500V3000`} fill="none" stroke="#1c1c1c" />
      {range(-1, 11).map((n) => {
        const y = zero + n * INCH;
        return (
          <g key={n}>
            {n !== 0 && <text x="0" y="0" transform={`translate(11 ${y}) rotate(-90)`} textAnchor="middle" fontSize="10" fill="#8b8b8b">{Math.abs(n)}</text>}
            <path d={`M3 ${y + 24.5}h6`} stroke="#1c1c1c" />
            {n > 0 && n < 11 && <path d={`M0 ${y + 0.5}h1M13 ${y + 0.5}h1`} stroke="#1c1c1c" />}
          </g>
        );
      })}
    </svg>
  );
}

/* ---------- scroll bars ---------- */

const TROUGH = "bg-[#dcdad8]";

function VerticalScroll() {
  return (
    <div className="mb-8 flex w-[13px] shrink-0 flex-col overflow-hidden rounded-full border border-[#bab8b6] bg-[#f4f3f2]">
      <button aria-label="Scroll up" className="flex h-3 items-center justify-center">
        <svg viewBox="0 0 6 3" className="h-[3px] w-[6px]"><path d="M3 0l3 3H0z" fill="#5c5c5c" /></svg>
      </button>
      <div className={`-mb-1 grow-[139] basis-0 rounded-t-full border-t border-[#b0aeac] ${TROUGH}`} />
      <div className="relative flex grow-[348] basis-0 items-center justify-center rounded-full border border-[#a3a19f] bg-linear-to-r from-white to-[#e6e5e3]">
        <svg viewBox="0 0 5 7" className="h-[7px] w-[5px]"><path d="M0 .5h5M0 3.500h5M0 6.500h5" stroke="#b0aeac" /></svg>
      </div>
      <div className={`-mt-1 grow-[144] basis-0 rounded-b-full border-b border-[#b0aeac] ${TROUGH}`} />
      <button aria-label="Scroll down" className="flex h-3 items-center justify-center">
        <svg viewBox="0 0 6 3" className="h-[3px] w-[6px]"><path d="M3 3l3-3H0z" fill="#5c5c5c" /></svg>
      </button>
    </div>
  );
}

function HorizontalScroll() {
  return (
    <div className="flex h-[13px] shrink-0 overflow-hidden rounded-full border border-[#bab8b6] bg-[#f4f3f2]">
      <button aria-label="Scroll left" className="flex w-3 items-center justify-center">
        <svg viewBox="0 0 3 6" className="h-[6px] w-[3px]"><path d="M0 3l3-3v6z" fill="#5c5c5c" /></svg>
      </button>
      <div className={`-mr-1 grow-[164] basis-0 rounded-l-full border-l border-[#b0aeac] ${TROUGH}`} />
      <div className="relative flex grow-[421] basis-0 items-center justify-center rounded-full border border-[#a3a19f] bg-linear-to-b from-white to-[#e6e5e3]">
        <svg viewBox="0 0 7 5" className="h-[5px] w-[7px]"><path d="M.5 0v5M3.500 0v5M6.500 0v5" stroke="#b0aeac" /></svg>
      </div>
      <div className={`-ml-1 grow-[129] basis-0 rounded-r-full border-r border-[#b0aeac] ${TROUGH}`} />
      <button aria-label="Scroll right" className="flex w-3 items-center justify-center">
        <svg viewBox="0 0 3 6" className="h-[6px] w-[3px]"><path d="M3 3L0 0v6z" fill="#5c5c5c" /></svg>
      </button>
    </div>
  );
}

/* ---------- work area ---------- */

const navs = [
  { name: "First layer", d: "M0 0h2v5l6-5v11L2 6v5H0z" },
  { name: "Previous layer", d: "M7 0v11L0 5.500z" },
  { name: "Next layer", d: "M1 0v11l7-5.500z" },
  { name: "Last layer", d: "M0 0l6 5V0h2v11H6V6l-6 5z" },
];

function LayerTabs() {
  const tabs = ["Layout", "Controls", "Dimension Lines"];
  const [active, setActive] = useState("Layout");
  return (
    <div className="flex h-[19px] shrink-0 items-stretch border-t border-[#8c8a88]">
      <div className="flex w-[94px] items-center gap-[10px] pl-[13px]">
        {navs.map((n) => (
          <button key={n.name} aria-label={n.name}><svg viewBox="0 0 8 11" className="h-[11px] w-2"><path d={n.d} fill="#1c1c1c" /></svg></button>
        ))}
      </div>
      <div role="tablist" className="flex">
        {tabs.map((t) => (
          <button
            key={t}
            role="tab"
            aria-selected={t === active}
            onClick={() => setActive(t)}
            className={`border-r border-b border-[#8c8a88] px-[10px] text-[12px] leading-4 first:border-l ${t === active ? "bg-white font-bold text-[#2e2e2e]" : "bg-[#dcd9d6] text-[#4c4c4c]"}`}
          >
            {t}
          </button>
        ))}
      </div>
    </div>
  );
}

function WorkArea() {
  return (
    <main className="flex min-w-0 flex-1 flex-col">
      <div className="flex min-h-0 flex-1">
        <div className="flex min-w-0 flex-1 flex-col">
          <div className="flex shrink-0 pt-1">
            <div className="flex w-5 shrink-0 items-center justify-center pl-[2px]">
              <svg viewBox="0 0 11 11" className="size-[11px]"><path d="M5.500 0v11M0 5.500h11" stroke="#4d4d4d" /></svg>
            </div>
            <HorizontalRuler />
          </div>
          <div className="flex min-h-0 flex-1">
            <VerticalRuler />
            <div className="min-w-0 flex-1 overflow-hidden pt-[39px] pl-32">
              <div className="w-[398px] bg-white shadow-[1px_2px_5px_rgba(0,0,0,0.5)] outline-1 -outline-offset-1 outline-[#929292]">
                <Drawing id="p" className="w-full" />
              </div>
            </div>
          </div>
          <HorizontalScroll />
        </div>
        <div className="-mb-[19px] flex pt-[1px]"><VerticalScroll /></div>
      </div>
      <LayerTabs />
    </main>
  );
}

/* ---------- properties ---------- */

const decks: Tool[] = [
  { name: "Properties", icon: <Glyph><path d="M.5.5h15v15H.5z" stroke={DARK} /><path d="M0 0h16v4H0zM2 6h5v8H2z" fill={DARK} /><path d="M9 6.500h5M9 9.500h4M9 12.500h2" stroke={DARK} /></Glyph> },
  { name: "Shapes", icon: <Glyph><path d="M2 1h12" stroke={DARK} strokeWidth="2" /><path d="M8 1v9" stroke={DARK} strokeWidth="2" /><path d="M.5 8v7.500H15z" stroke={DARK} strokeWidth="1.100" /></Glyph> },
  { name: "Gallery", icon: <Glyph><path d="M.5.5h15v15H.5z" stroke={DARK} /><circle cx="4.500" cy="4.500" r="1.800" stroke={DARK} /><path d="M2 13l4-4 2 1 3-3 3 3" stroke={DARK} /></Glyph> },
  { name: "Navigator", icon: <Glyph><circle cx="8" cy="8" r="7.300" stroke={DARK} strokeWidth="1.200" /><path d="M11 5L9.500 9 5 11l1.500-4.500z" stroke={DARK} /></Glyph> },
];

function PropertiesPanel() {
  return (
    <aside className="flex w-[336px] shrink-0 border-y-2 border-[#2c2a28] pt-[2px] pb-[2px] pl-[3px]">
      <section aria-label="Properties" className="flex flex-1 flex-col border border-[#e0dfdd]">
        <div className="flex h-[27px] items-center justify-between border-b border-[#e0dfdd] pr-[5px] pl-[10px]">
          <h2 className="text-[14px] leading-5 font-bold text-[#4c4c4c]">Properties</h2>
          <button aria-label="Close sidebar"><CloseX /></button>
        </div>
        <div className="h-[164px] border-b border-[#e0dfdd]" />
      </section>
      <div className="flex w-10 shrink-0 flex-col items-center">
        <button aria-label="Sidebar settings" className="flex h-8 w-8 items-center justify-center">
          <svg viewBox="0 0 16 16" className="size-4" fill="none"><path d="M0 2.500h16M5 13.500h11" stroke={DARK} /><circle cx="8.500" cy="2.500" r="2.400" fill={DARK} /><circle cx="2.500" cy="13.500" r="1.900" stroke={DARK} /></svg>
        </button>
        <span className="my-[2px] w-[23px] border-t border-[#d9d7d5]" />
        {decks.map((d, i) => (
          <div key={d.name} className="flex h-[35px] items-center">
            <button aria-label={d.name} className={`flex size-8 items-center justify-center rounded-[4px] ${i === 0 ? "border border-[#b5b3b1]" : ""}`}>{d.icon}</button>
          </div>
        ))}
      </div>
    </aside>
  );
}

/* ---------- status bar ---------- */

const CELL = "flex shrink-0 items-center h-4 border-l border-[#cfcdcb]";

function StatusBar() {
  const [zoom, setZoom] = useState(20);
  return (
    <footer className="flex h-[21px] shrink-0 items-center border-t border-[#2c2a28] text-[12px] leading-4 text-[#4c4c4c]">
      <div className="w-[392px] shrink-0" />
      <div className={`${CELL} w-[204px] gap-[6px] pl-[10px]`}>
        <svg viewBox="0 0 14 12" className="h-3 w-[14px]" fill="none"><path d="M6 2.500h7.500v8h-11V7" stroke={DARK} /><path d="M2.500 0v5M0 2.500h5" stroke="#1b8ae0" /></svg>
        1.23 / 2.29
      </div>
      <div className="flex min-w-[209px] flex-1 items-center gap-[6px] pl-[10px]">
        <svg viewBox="0 0 14 12" className="h-3 w-[14px]" fill="none"><path d="M4.500 5.500h9v5h-9z" stroke={DARK} /><path d="M4 1.500h10M4.500 0v3M13.500 0v3M1.500 5v6M0 5.500h3M0 10.500h3" stroke="#1b8ae0" /></svg>
        0.00 x 0.00
      </div>
      <div className={`${CELL} w-[22px] justify-center`}>
        <svg viewBox="0 0 10 10" className="size-[10px]" fill="none"><path d="M.5.5h7l2 2v7h-9zM2.500.5v3h4v-3M2.500 9.500v-4h5v4" stroke="#aaa8a6" /></svg>
      </div>
      <div className={`${CELL} w-[29px]`} />
      <div className={`${CELL} w-[121px] pl-[7px]`}>Slide 1 of 1</div>
      <div className={`${CELL} w-[129px] pl-[7px]`}>Default</div>
      <div className={`${CELL} w-[23px] justify-center`}>
        <button aria-label="Fit page to window">
          <svg viewBox="0 0 12 12" className="size-3" fill={DARK}><path d="M6 0l2 2.500H4zM6 12l2-2.500H4zM0 6l2.500-2v4zM12 6L9.500 4v4zM5 5h2v2H5zM2 2h1v1H2zM9 2h1v1H9zM2 9h1v1H2zM9 9h1v1H9z" /></svg>
        </button>
      </div>
      <div className={`${CELL} w-[142px] justify-between pr-2 pl-[10px]`}>
        <button aria-label="Zoom out"><svg viewBox="0 0 7 7" className="size-[7px]"><path d="M0 3.500h7" stroke={DARK} /></svg></button>
        <span className="relative flex w-[98px] items-center">
          <span className="absolute left-[46px] h-[11px] w-[2px] bg-[#1c1c1c]" />
          <span className="absolute left-[23px] h-[11px] w-[2px] bg-[#1c1c1c]" />
          <input
            type="range"
            aria-label="Zoom"
            value={zoom}
            onChange={(e) => setZoom(Number(e.target.value))}
            className="relative h-[11px] w-full appearance-none bg-transparent [&::-webkit-slider-runnable-track]:h-[2px] [&::-webkit-slider-runnable-track]:bg-[#1c1c1c] [&::-webkit-slider-thumb]:-mt-[3px] [&::-webkit-slider-thumb]:size-2 [&::-webkit-slider-thumb]:appearance-none [&::-webkit-slider-thumb]:rounded-full [&::-webkit-slider-thumb]:border [&::-webkit-slider-thumb]:border-[#4d4d4d] [&::-webkit-slider-thumb]:bg-[#f2f1f0]"
          />
        </span>
        <button aria-label="Zoom in"><svg viewBox="0 0 7 7" className="size-[7px]"><path d="M0 3.500h7M3.500 0v7" stroke={DARK} /></svg></button>
      </div>
      <div className={`${CELL} w-[49px] pl-[11px]`}>50%</div>
    </footer>
  );
}

export default function App() {
  return (
    <div className="flex h-screen flex-col overflow-hidden bg-[#f2f1f0] font-['Noto_Sans','Open_Sans',sans-serif]">
      <TopBar />
      <div className="flex min-h-0 flex-1">
        <Launcher />
        <div className="flex min-w-0 flex-1 flex-col">
          <Toolbar />
          <div className="flex min-h-0 flex-1">
            <DrawingTools />
            <PagesPanel />
            <Splitter label="Hide pages panel" />
            <WorkArea />
            <Splitter label="Hide sidebar" end />
            <PropertiesPanel />
          </div>
          <StatusBar />
        </div>
      </div>
    </div>
  );
}
